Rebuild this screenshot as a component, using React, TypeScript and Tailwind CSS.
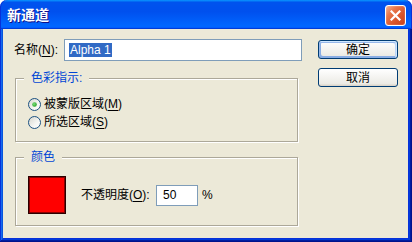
import React from "react";

function Radio({ checked }: { checked?: boolean }) {
  return (
    <svg width="13" height="13" viewBox="0 0 13 13" className="shrink-0">
      <defs>
        <linearGradient id="rgBg" x1="0" y1="0" x2="1" y2="1">
          <stop offset="0" stopColor="#D4D4CC" />
          <stop offset="0.6" stopColor="#F6F6F3" />
          <stop offset="1" stopColor="#FFFFFF" />
        </linearGradient>
        <radialGradient id="rgDot" cx="0.4" cy="0.4" r="0.7">
          <stop offset="0" stopColor="#7BE07A" />
          <stop offset="1" stopColor="#1E9A1E" />
        </radialGradient>
      </defs>
      <circle cx="6.5" cy="6.5" r="6" fill="url(#rgBg)" stroke="#1C5180" strokeWidth="1" />
      {checked && <circle cx="6.5" cy="6.5" r="2.3" fill="url(#rgDot)" />}
    </svg>
  );
}

function U({ children }: { children: React.ReactNode }) {
  return <span className="underline underline-offset-[2px]">{children}</span>;
}

export default function App() {
  return (
    <div className="w-[412px] h-[242px] bg-white text-[12px] leading-[14px] text-black font-['Liberation_Sans','Noto_Sans_CJK_SC',sans-serif]">
      <div className="w-full h-full flex flex-col">
        {/* Title bar */}
        <div className="h-[29px] shrink-0 rounded-t-[7px] flex items-start pl-[7px] pr-[6px] bg-[linear-gradient(180deg,#0997ff,#0053ee_8%,#0050ee_40%,#0066ff_88%,#0066ff_93%,#005bff_95%,#003dd7_96%,#003dd7)] shadow-[inset_1px_0_#0831d9,inset_-1px_0_#0831d9]">
          <span className="mt-[7px] text-white font-bold text-[14px] leading-[16px] [text-shadow:1px_1px_#0f1089]">
            新通道
          </span>
          <div className="ml-auto mt-[5px] w-[21px] h-[21px] rounded-[3px] border border-white bg-[linear-gradient(135deg,#F3B295_0%,#E8774B_30%,#D9542A_65%,#C9431C_100%)] flex items-center justify-center shadow-[inset_0_0_1px_#ffffff]">
            <svg width="11" height="11" viewBox="0 0 11 11">
              <path d="M1.5 1.5 L9.5 9.5 M9.5 1.5 L1.5 9.5" stroke="#ffffff" strokeWidth="2.2" strokeLinecap="square" />
            </svg>
          </div>
        </div>

        {/* Frame + body */}
        <div className="flex-1 flex pl-[3px] pr-[4px] pb-[4px] bg-[#0831D9] shadow-[inset_-1px_-1px_#00138c,inset_1px_0_#0831d9,inset_-2px_-2px_#001ea0,inset_2px_0_#166aee,inset_-3px_-3px_#003bda,inset_3px_0_#0855dd]">
          <div className="flex-1 flex bg-[#ECE9D8] pt-[10px] pl-[11px] pr-[10px]">
            {/* Left column */}
            <div className="w-[288px] flex flex-col">
              <div className="h-[22px] flex items-center">
                <span className="flex-1 whitespace-nowrap">
                  名称(<U>N</U>):
                </span>
                <div className="w-[238px] h-[22px] border border-[#7F9DB9] bg-white flex items-center pl-[4px]">
                  <span className="bg-[#316AC5] text-white leading-[14px] px-px">Alpha 1</span>
                </div>
              </div>

              {/* Group 1 */}
              <div className="mt-[17px] ml-px w-[283px] border border-[#ACA899] shadow-[inset_1px_1px_#ffffff,1px_1px_#ffffff] flex flex-col pl-[12px] pb-[10px]">
                <span className="-mt-[8px] -ml-[4px] self-start px-[7px] bg-[#ECE9D8] text-[#0046D5] leading-[14px] whitespace-nowrap">
                  色彩指示:
                </span>
                <div className="mt-[10px] h-[18px] flex items-center gap-[3px]">
                  <Radio checked />
                  <span className="whitespace-nowrap">
                    被蒙版区域(<U>M</U>)
                  </span>
                </div>
                <div className="h-[18px] flex items-center gap-[3px]">
                  <Radio />
                  <span className="whitespace-nowrap">
                    所选区域(<U>S</U>)
                  </span>
                </div>
              </div>

              {/* Group 2 */}
              <div className="mt-[15px] ml-px w-[283px] border border-[#ACA899] shadow-[inset_1px_1px_#ffffff,1px_1px_#ffffff] flex flex-col pl-[12px] pb-[11px]">
                <span className="-mt-[8px] -ml-[4px] self-start px-[7px] bg-[#ECE9D8] text-[#0046D5] leading-[14px] whitespace-nowrap">
                  颜色
                </span>
                <div className="mt-[12px] flex items-center">
                  <div className="w-[38px] h-[38px] bg-[#FF0000] border border-[#2A0000] shadow-[inset_0_0_0_1px_#8A0000]" />
                  <span className="ml-[15px] w-[75px] whitespace-nowrap">
                    不透明度(<U>O</U>):
                  </span>
                  <div className="w-[42px] h-[21px] border border-[#7F9DB9] bg-white flex items-center pl-[6px]">
                    50
                  </div>
                  <span className="ml-[4px]">%</span>
                </div>
              </div>
            </div>

            {/* Buttons */}
            <div className="ml-[16px] w-[80px] flex flex-col pt-px gap-[9px]">
              <div className="h-[19px] rounded-[3px] border border-[#003C74] bg-[linear-gradient(180deg,#ffffff,#ecebe5_86%,#d8d0c4)] shadow-[inset_-1px_1px_#cee7ff,inset_1px_2px_#98b8ea,inset_-2px_2px_#bcd4f6,inset_1px_-1px_#89ade4,inset_2px_-2px_#89ade4] flex items-center justify-center">
                确定
              </div>
              <div className="h-[19px] rounded-[3px] border border-[#003C74] bg-[linear-gradient(180deg,#ffffff,#ecebe5_86%,#d8d0c4)] flex items-center justify-center">
                取消
              </div>
            </div>
          </div>
        </div>
      </div>
    </div>
  );
}
